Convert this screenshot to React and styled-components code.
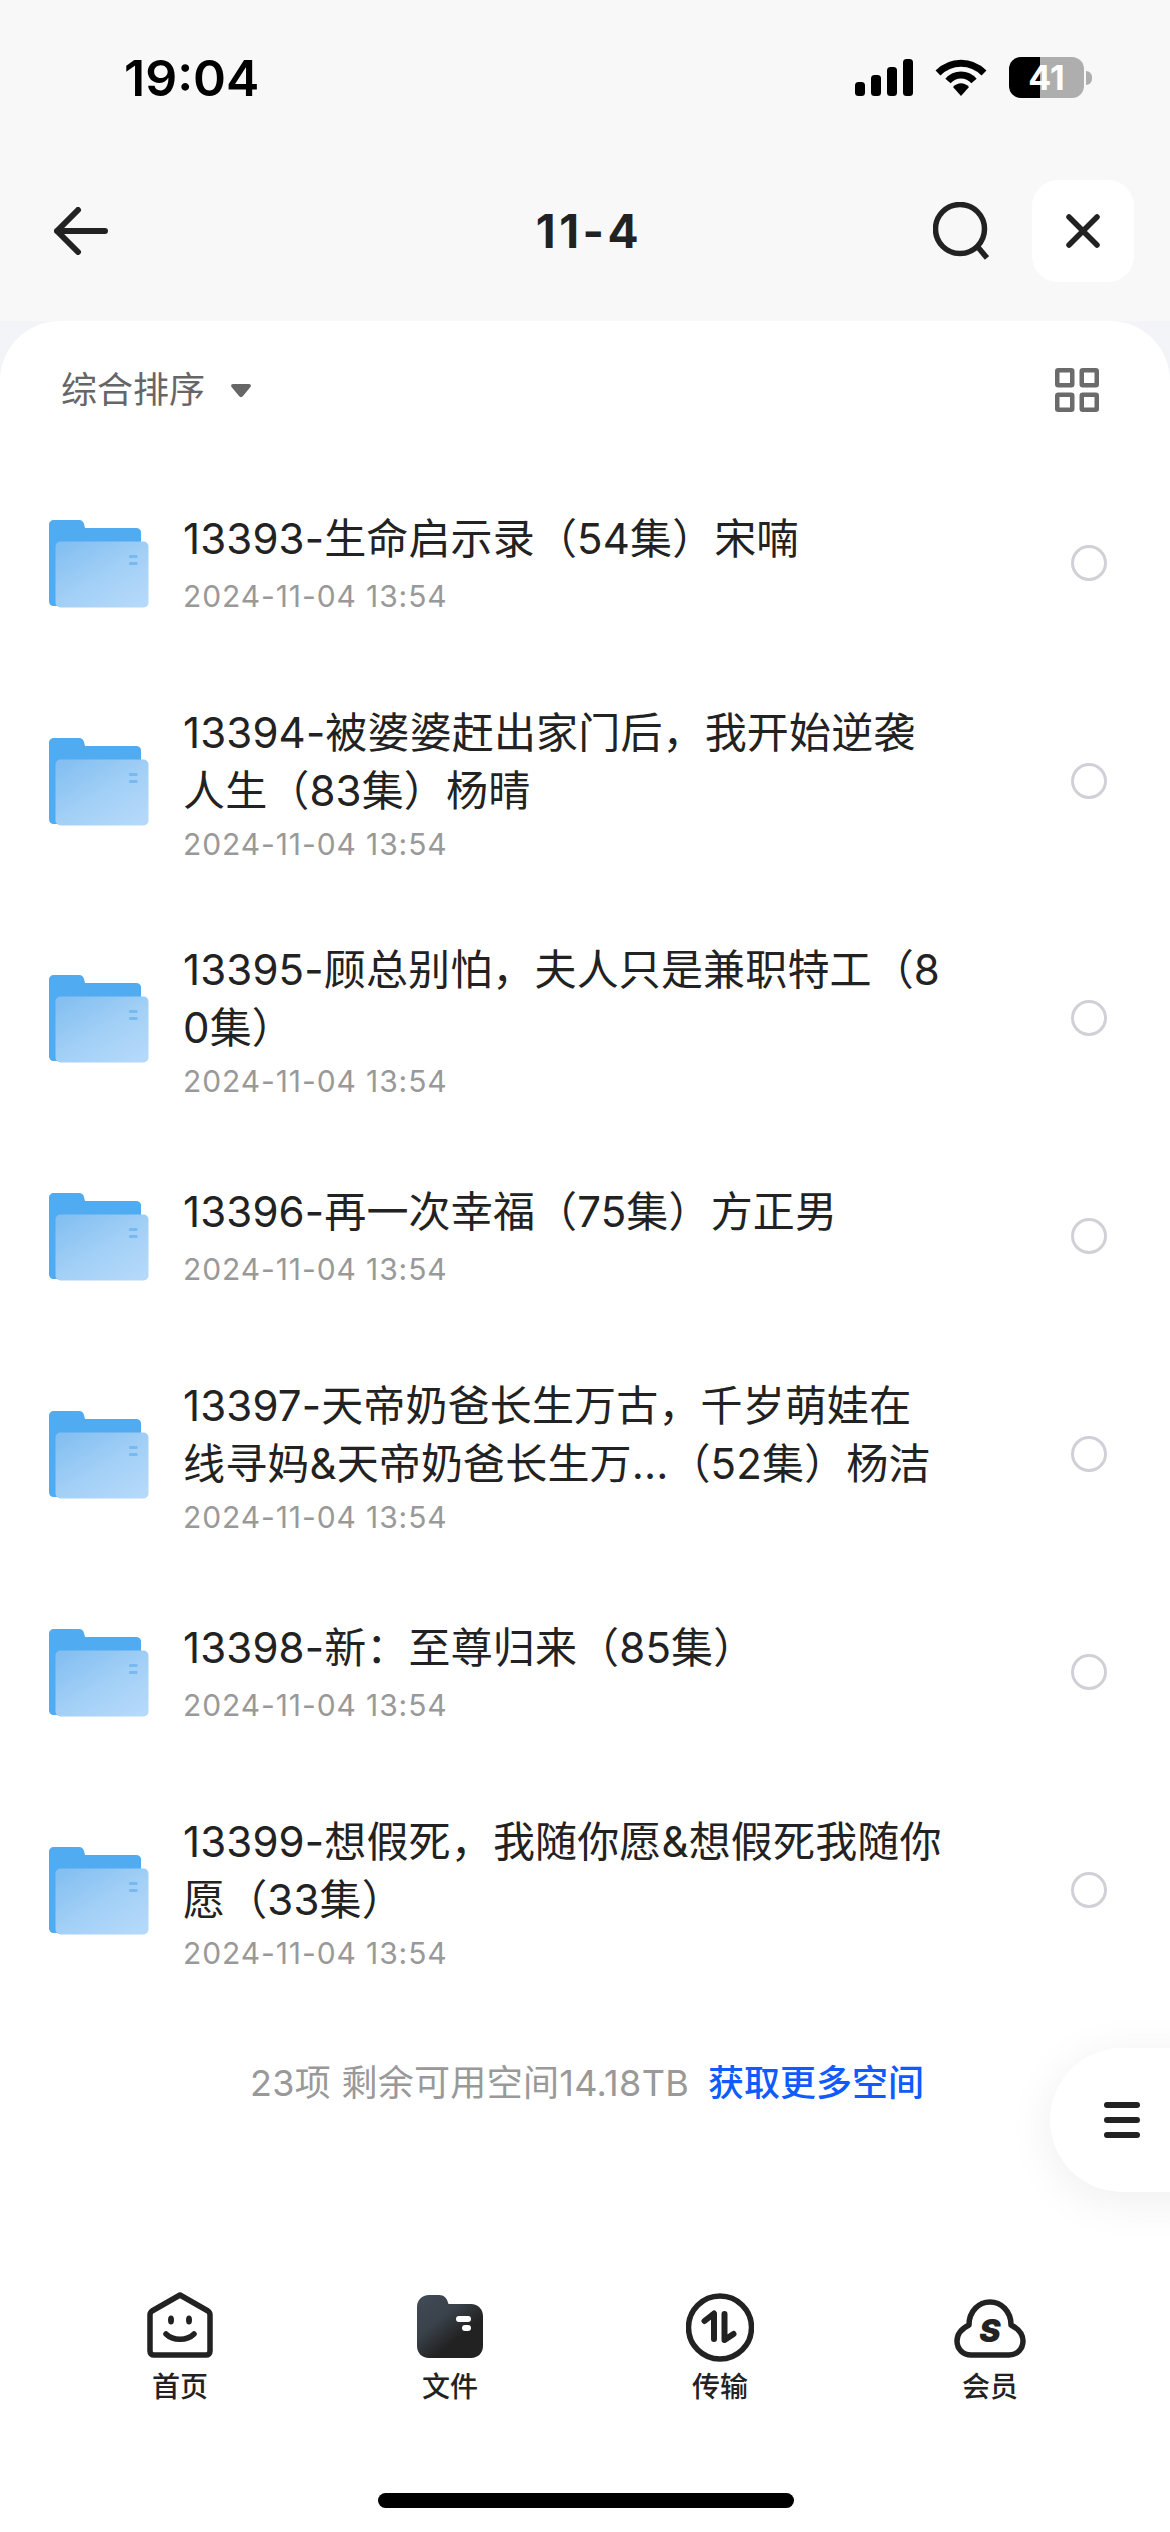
import React from "react";
import styled, { createGlobalStyle } from "styled-components";

const Global = createGlobalStyle`
  html, body { margin: 0; padding: 0; background: #fff; }
  * { box-sizing: border-box; }
`;

const CJK = `Inter, "Noto Sans CJK SC", "Liberation Sans", sans-serif`;

const Page = styled.div`
  position: relative;
  width: 1170px;
  height: 2532px;
  overflow: hidden;
  background: #f3f4f8;
  font-family: ${CJK};
  color: #222;
`;
const Top = styled.div`
  height: 321px;
  background: #f8f8f8;
`;
const StatusBar = styled.div`
  height: 180px;
  padding: 49px 78px 0 124px;
  display: flex;
  justify-content: space-between;
  align-items: flex-start;
`;
const Time = styled.div`
  font-family: Inter, sans-serif;
  font-size: 50px;
  font-weight: 600;
  line-height: 58px;
  color: #000;
`;
const StatusIcons = styled.div`
  display: flex;
  align-items: center;
  height: 41px;
  margin-top: 8px;
`;
const Battery = styled.div`
  position: relative;
  width: 75px;
  height: 41px;
  margin-left: 22px;
  border-radius: 12px;
  overflow: hidden;
  background: linear-gradient(90deg, #000 0 31px, #aeaeae 31px);
  color: #fff;
  font-family: Inter, sans-serif;
  font-size: 34px;
  font-weight: 700;
  line-height: 41px;
  text-align: center;
`;
const Nub = styled.div`
  width: 6px;
  height: 14px;
  margin-left: 2px;
  border-radius: 0 7px 7px 0;
  background: #aeaeae;
`;
const NavBar = styled.div`
  height: 102px;
  padding: 0 36px 0 54px;
  display: flex;
  align-items: center;
`;
const NavTitle = styled.div`
  flex: 1;
  text-align: center;
  font-family: Inter, sans-serif;
  font-size: 46px;
  font-weight: 700;
  line-height: 60px;
  letter-spacing: 3.5px;
  color: #222;
  padding-left: 137px;
`;
const CloseBox = styled.div`
  width: 102px;
  height: 102px;
  margin-left: 43px;
  border-radius: 26px;
  background: #fff;
  display: flex;
  align-items: center;
  justify-content: center;
`;
const Sheet = styled.div`
  height: 2211px;
  background: #fff;
  border-radius: 60px 60px 0 0;
  display: flex;
  flex-direction: column;
`;
const SortRow = styled.div`
  height: 142.5px;
  padding: 47px 71px 0 61px;
  display: flex;
  justify-content: space-between;
  align-items: flex-start;
`;
const SortLabel = styled.div`
  display: flex;
  align-items: center;
  gap: 26px;
  font-size: 36px;
  line-height: 42px;
  color: #666;
  margin-top: 1px;
`;
const Caret = styled.svg`
  display: block;
  margin-top: 2px;
`;
const List = styled.div`
  display: flex;
  flex-direction: column;
`;
const Row = styled.div`
  display: flex;
  align-items: flex-start;
  height: ${(p) => (p.$double ? 237 : 199)}px;
  padding: 0 63px 0 49px;
`;
const FolderIcon = styled.svg`
  flex: none;
  align-self: center;
  margin-top: 2px;
`;
const Text = styled.div`
  width: 766px;
  margin-left: 34px;
  padding-top: ${(p) => (p.$double ? 41.5 : 46.5)}px;
`;
const Title = styled.div`
  font-size: 42px;
  line-height: 58px;
  letter-spacing: 0.15px;
  color: #222;
  word-break: break-all;
`;
const Stamp = styled.div`
  margin-top: ${(p) => (p.$double ? 9 : 13)}px;
  font-size: 30px;
  line-height: 30px;
  letter-spacing: 0.9px;
  color: #999;
`;
const Radio = styled.div`
  flex: none;
  align-self: center;
  width: 36px;
  height: 36px;
  margin-left: auto;
  border: 3px solid #d0d0d6;
  border-radius: 50%;
`;
const Storage = styled.div`
  margin-top: 53.5px;
  text-align: center;
  font-size: 36px;
  line-height: 42px;
  letter-spacing: 0.3px;
  color: #999;
  padding-left: 4px;
`;
const MoreSpace = styled.span`
  margin-left: 19px;
  letter-spacing: 0;
  color: #0f5bff;
  font-weight: 500;
`;
const Fab = styled.div`
  position: absolute;
  left: 1050px;
  top: 2048px;
  width: 160px;
  height: 144px;
  border-radius: 72px 0 0 72px;
  background: #fff;
  box-shadow: 0 8px 48px rgba(0, 0, 0, 0.07);
  padding-left: 54px;
  display: flex;
  flex-direction: column;
  justify-content: center;
  gap: 9px;
`;
const FabBar = styled.div`
  width: 36px;
  height: 6px;
  border-radius: 3px;
  background: #222;
`;
const TabBar = styled.div`
  margin-top: 183.5px;
  padding: 0 45px;
  display: grid;
  grid-template-columns: repeat(4, 270px);
`;
const Tab = styled.div`
  display: flex;
  flex-direction: column;
  align-items: center;
`;
const TabIcon = styled.div`
  height: 70px;
  display: flex;
  align-items: flex-end;
  justify-content: center;
  transform: translateY(${(p) => p.$drop || 0}px);
`;
const TabLabel = styled.div`
  margin-top: 13px;
  font-size: 28px;
  font-weight: 500;
  line-height: 32px;
  color: #222;
`;
const HomeBar = styled.div`
  position: absolute;
  left: 378px;
  top: 2493px;
  width: 416px;
  height: 15px;
  border-radius: 8px;
  background: #000;
`;

const Folder = ({ id }) => (
  <FolderIcon width="100" height="88" viewBox="0 0 100 88">
    <defs>
      <linearGradient id={id} x1="0.05" y1="0.05" x2="0.85" y2="1">
        <stop offset="0" stopColor="#83bff1" />
        <stop offset="0.55" stopColor="#a3d0f6" />
        <stop offset="1" stopColor="#b4d9fa" />
      </linearGradient>
    </defs>
    <path
      d="M5 0H30c3 0 4.500 2 5 4l1 4H87c3 0 5 2 5 4v74H5c-3 0-5-2-5-5V5c0-3 2-5 5-5z"
      fill="#50abf1"
    />
    <rect x="6.500" y="21.500" width="93" height="66" rx="5" fill={`url(#${id})`} />
    <rect x="80" y="35" width="8.500" height="3" rx="1" fill="#78b9ef" />
    <rect x="80" y="42" width="8.500" height="3" rx="1" fill="#78b9ef" />
  </FolderIcon>
);

const rows = [
  { title: "13393-生命启示录（54集）宋喃" },
  { title: "13394-被婆婆赶出家门后，我开始逆袭人生（83集）杨晴", double: true },
  { title: "13395-顾总别怕，夫人只是兼职特工（80集）", double: true },
  { title: "13396-再一次幸福（75集）方正男" },
  { title: "13397-天帝奶爸长生万古，千岁萌娃在线寻妈&天帝奶爸长生万...（52集）杨洁", double: true },
  { title: "13398-新：至尊归来（85集）" },
  { title: "13399-想假死，我随你愿&想假死我随你愿（33集）", double: true },
];

export default function App() {
  return (
    <Page>
      <Global />
      <Top>
        <StatusBar>
          <Time>19:04</Time>
          <StatusIcons>
            <svg width="58" height="37" viewBox="0 0 58 37" fill="#000">
              <rect x="0" y="23" width="10" height="14" rx="3.500" />
              <rect x="16" y="16" width="10" height="21" rx="3.500" />
              <rect x="32" y="8" width="10" height="29" rx="3.500" />
              <rect x="48" y="0" width="10" height="37" rx="3.500" />
            </svg>
            <svg width="52" height="37" viewBox="0 0 52 37" style={{ marginLeft: 22 }}>
              <path d="M3 14C16 1 36 1 49 14" fill="none" stroke="#000" strokeWidth="7" />
              <path d="M13 22C20 14 32 14 39 22" fill="none" stroke="#000" strokeWidth="7" />
              <path d="M18 28C23 23 29 23 34 28L26 37z" fill="#000" />
            </svg>
            <Battery>41</Battery>
            <Nub />
          </StatusIcons>
        </StatusBar>
        <NavBar>
          <svg width="54" height="48" viewBox="0 0 54 48" fill="none" stroke="#222" strokeWidth="6" strokeLinecap="round" strokeLinejoin="round">
            <path d="M3 24H51M24 3L3 24L24 45" />
          </svg>
          <NavTitle>11-4</NavTitle>
          <svg width="56" height="58" viewBox="0 0 56 58" fill="none" stroke="#222" strokeWidth="5.500">
            <circle cx="27" cy="27" r="24.500" />
            <path d="M44 44L54 56" />
          </svg>
          <CloseBox>
            <svg width="34" height="34" viewBox="0 0 34 34" fill="none" stroke="#222" strokeWidth="5.500" strokeLinecap="round">
              <path d="M3 3L31 31M31 3L3 31" />
            </svg>
          </CloseBox>
        </NavBar>
      </Top>
      <Sheet>
        <SortRow>
          <SortLabel>
            综合排序
            <Caret width="20" height="14" viewBox="0 0 20 14" fill="#666">
              <path d="M2 0H18c2 0 2.500 2 1 3.500L12 12c-1 1.500-3 1.500-4 0L1 3.500C-.5 2 0 0 2 0z" />
            </Caret>
          </SortLabel>
          <svg width="44" height="44" viewBox="0 0 44 44" fill="none" stroke="#6b6b6b" strokeWidth="4.500">
            <rect x="2.250" y="2.250" width="15" height="15" rx="1" />
            <rect x="26.750" y="2.250" width="15" height="15" rx="1" />
            <rect x="2.250" y="26.750" width="15" height="15" rx="1" />
            <rect x="26.750" y="26.750" width="15" height="15" rx="1" />
          </svg>
        </SortRow>
        <List>
          {rows.map((r, i) => (
            <Row key={r.title} $double={r.double}>
              <Folder id={`folder-${i}`} />
              <Text $double={r.double}>
                <Title>{r.title}</Title>
                <Stamp $double={r.double}>2024-11-04 13:54</Stamp>
              </Text>
              <Radio />
            </Row>
          ))}
        </List>
        <Storage>
          23项 剩余可用空间14.18TB
          <MoreSpace>获取更多空间</MoreSpace>
        </Storage>
        <TabBar>
          <Tab>
            <TabIcon>
              <svg width="66" height="66" viewBox="0 0 66 66" fill="none" stroke="#222" strokeWidth="5.500" strokeLinecap="round" strokeLinejoin="round">
                <path d="M33 3L61 19C62.500 20 63 21 63 23V59C63 61.500 61.500 63 59 63H7C4.500 63 3 61.500 3 59V23C3 21 3.500 20 5 19z" />
                <ellipse cx="24" cy="28" rx="3" ry="4.500" fill="#222" stroke="none" />
                <ellipse cx="42" cy="28" rx="3" ry="4.500" fill="#222" stroke="none" />
                <path d="M19 42C26 49 40 49 47 42" />
              </svg>
            </TabIcon>
            <TabLabel>首页</TabLabel>
          </Tab>
          <Tab>
            <TabIcon>
              <svg width="66" height="63" viewBox="0 0 66 63">
                <defs>
                  <linearGradient id="files-tab" x1="0" y1="0" x2="0.6" y2="0.7">
                    <stop offset="0" stopColor="#414b56" />
                    <stop offset="0.55" stopColor="#3a424b" />
                    <stop offset="1" stopColor="#222" />
                  </linearGradient>
                </defs>
                <path
                  d="M12 0H22C27 0 30 3 31.500 9H54C61 9 66 14 66 21V51C66 58 61 63 54 63H12C5 63 0 58 0 51V12C0 5 5 0 12 0z"
                  fill="url(#files-tab)"
                />
                <rect x="39" y="21" width="15" height="6" rx="3" fill="#fff" />
                <rect x="45" y="30" width="9" height="6" rx="3" fill="#fff" />
              </svg>
            </TabIcon>
            <TabLabel>文件</TabLabel>
          </Tab>
          <Tab>
            <TabIcon $drop={4}>
              <svg width="68" height="69" viewBox="0 0 68 69" fill="none" stroke="#222" strokeWidth="6" strokeLinecap="round" strokeLinejoin="round">
                <circle cx="34" cy="34.500" r="31.500" strokeWidth="5.500" />
                <path d="M18.500 28L28 20.500V46" />
                <path d="M38.500 21V47L47.500 41" />
              </svg>
            </TabIcon>
            <TabLabel>传输</TabLabel>
          </Tab>
          <Tab>
            <TabIcon>
              <svg width="72" height="59" viewBox="0 0 72 59" fill="none" stroke="#222" strokeWidth="5.500" strokeLinejoin="round">
                <path d="M17 56H55C63 56 69 50 69 42C69 34 63 29 57 26C57 12 47 3 36 3C25 3 15 12 15 26C9 29 3 34 3 42C3 50 9 56 17 56z" />
                <text x="36" y="43" textAnchor="middle" fontFamily="Inter, sans-serif" fontSize="32" fontWeight="900" fontStyle="italic" fill="#222" stroke="none">S</text>
              </svg>
            </TabIcon>
            <TabLabel>会员</TabLabel>
          </Tab>
        </TabBar>
      </Sheet>
      <Fab>
        <FabBar />
        <FabBar />
        <FabBar />
      </Fab>
      <HomeBar />
    </Page>
  );
}
